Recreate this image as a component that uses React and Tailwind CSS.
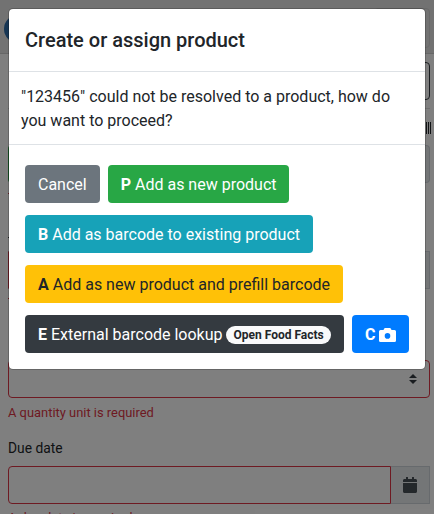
import { FaCalendar } from "react-icons/fa";

function Hint({ className, children }) {
  return <div className={`text-[12.9px] leading-5 text-[#dc3545] ${className}`}>{children}</div>;
}

function CameraIcon() {
  return (
    <svg className="h-4 w-[17px] shrink-0" viewBox="0 0 17 16" fill="currentColor" fillRule="evenodd">
      <path d="M1.5 3H4.5L5.2 1.6Q5.5 1 6.2 1H10.8Q11.5 1 11.8 1.6L12.5 3H15.5Q17 3 17 4.5V13.5Q17 15 15.5 15H1.5Q0 15 0 13.5V4.5Q0 3 1.5 3ZM8.5 6.1A2.8 2.8 0 1 0 8.5 11.7A2.8 2.8 0 1 0 8.5 6.1Z" />
    </svg>
  );
}

function Page() {
  return (
    <div className="h-[514px] overflow-hidden bg-white">
      <header className="flex h-[54px] items-start justify-between border-b border-[#cfcfcf] bg-[#e5e5e5] pl-1 pr-1 pt-2">
        <div className="mt-[7px] h-7 w-16 rounded-full bg-[#2f6ca8]" />
        <div className="h-10 w-14 rounded border border-[#d2d2d2]" />
      </header>
      <main className="flex flex-col pl-2 pr-1 pt-2">
        <div className="h-[38px] w-24 self-end rounded border border-[#343a40]" />
        <div className="mt-2 h-px bg-[#dfdfdf]" />
        <div className="-mr-px mt-[13px] flex h-3 justify-end gap-[0.7px]">
          <i className="w-[1.4px] bg-[#212529]" />
          <i className="w-[1.2px] bg-[#212529]" />
          <i className="w-[1.2px] bg-[#212529]" />
        </div>
        <div className="mt-[11px] h-[38px] rounded border border-l-[#28a745] border-[#ced4da] bg-[#e9ecef]" />
        <div className="mt-[10px] h-px w-4 bg-[#dc3545]" />
        <div className="mt-[43px] h-px w-4 bg-[#343a40]" />
        <div className="mt-[13px] h-[38px] border border-l-[#dc3545] border-[#ced4da] bg-[#e9ecef]" />
        <div className="mt-[9px] h-px w-4 bg-[#dc3545]" />
        <div className="mt-[61px] flex h-[38px] items-center justify-end rounded border border-[#dc3545] pr-[12px]">
          <svg width="8" height="10" viewBox="0 0 8 10" fill="#343a40">
            <path d="M0 4 4 0l4 4zM0 6h8l-4 4z" />
          </svg>
        </div>
        <Hint className="mt-[5px]">A quantity unit is required</Hint>
        <div className="mt-[15px] text-[13.8px] leading-5 text-[#212529]">Due date</div>
        <div className="mt-2 flex h-[38px]">
          <div className="flex-1 rounded-l border border-[#dc3545]" />
          <div className="flex w-[39px] items-center justify-center border border-l-0 border-[#ced4da] bg-[#e9ecef]">
            <FaCalendar className="size-4 text-[#495057]" />
          </div>
        </div>
        <Hint className="mt-1">A due date is required</Hint>
      </main>
    </div>
  );
}

function Button({ className, children }) {
  return (
    <button className={`mb-3 mr-2 inline-flex h-[38px] items-center whitespace-pre rounded px-[13px] pt-px text-[16px] leading-6 ${className}`}>
      {children}
    </button>
  );
}

function Dialog() {
  return (
    <div role="dialog" className="mx-2 mt-2 h-[362px] rounded-[5px] border border-black/20 bg-white bg-clip-padding text-[16px] leading-6 text-[#212529]">
      <h5 className="h-[63px] border-b border-[#dee2e6] px-4 pt-4 text-[20px] font-medium leading-[30px]">
        Create or assign product
      </h5>
      <div className="h-[73px] border-b border-[#dee2e6] px-3 pt-[13px]">
        "123456" could not be resolved to a product, how do you want to proceed?
      </div>
      <div className="flex flex-wrap pl-4 pt-5">
        <Button className="bg-[#6c757d] text-white">Cancel</Button>
        <Button className="w-[181px] bg-[#28a745] text-white"><b>P</b> Add as new product</Button>
        <Button className="bg-[#17a2b8] text-white"><b>B</b> Add as barcode to existing product</Button>
        <Button className="bg-[#ffc107] text-[#212529]"><b>A</b> Add as new product and prefill barcode</Button>
        <Button className="w-[319px] bg-[#343a40] text-white">
          <b>E</b> External barcode lookup{" "}
          <span className="-ml-px rounded-full bg-[#f8f9fa] pl-2 pr-[7px] py-[3px] text-[12px] font-bold leading-3 text-[#212529]">Open Food Facts</span>
        </Button>
        <Button className="w-[57px] gap-1 bg-[#007bff] text-white">
          <b>C</b>
          <CameraIcon />
        </Button>
      </div>
    </div>
  );
}

export default function App() {
  return (
    <div className="relative h-[514px] w-[434px] overflow-hidden font-['Roboto',sans-serif]">
      <Page />
      <div className="absolute inset-0 bg-black/50">
        <Dialog />
      </div>
    </div>
  );
}
